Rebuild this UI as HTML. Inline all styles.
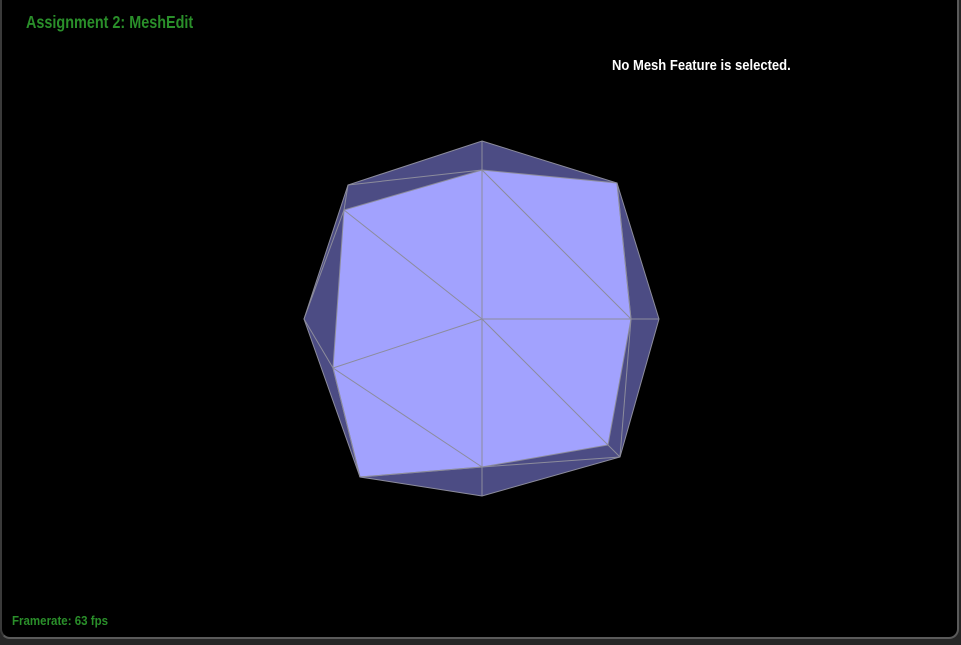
<!DOCTYPE html>
<html><head><meta charset="utf-8"><style>
html,body{margin:0;padding:0;width:961px;height:645px;background:#262626;overflow:hidden}
#frame{position:absolute;left:0;top:0;width:959px;height:639px;background:#000;border-right:2px solid #5a5a5a;border-bottom:2px solid #5a5a5a;border-left:2px solid #3a3a3a;border-radius:0 0 10px 10px;box-sizing:border-box}
.t{position:absolute;font-family:"Liberation Sans",sans-serif;font-weight:bold;white-space:nowrap;transform-origin:0 0}
</style></head><body>
<div id="frame"></div>
<div class="t" style="left:26px;top:14px;font-size:16px;color:#2a8f2a;transform:scaleX(0.9) scaleY(1.08)">Assignment 2: MeshEdit</div>
<div class="t" style="left:612px;top:56px;font-size:14px;color:#fff;transform:scaleX(0.93) scaleY(1.08)">No Mesh Feature is selected.</div>
<div class="t" style="left:12px;top:613px;font-size:12px;color:#2a8f2a;transform:scaleX(0.96) scaleY(1.1)">Framerate: 63 fps</div>
<svg width="961" height="645" style="position:absolute;left:0;top:0">
<polygon points="482,141 617,183 659,319 620,457 482,496 360,477 304,319 348,185" fill="#4c4c84"/>
<polygon points="482,170 617,183 631,319 608,445 482,467 360,477 333,368 344,210" fill="#a2a2fe"/>
<g stroke="#8c8c9c" stroke-width="1" fill="none">
<polygon points="482,141 617,183 659,319 620,457 482,496 360,477 304,319 348,185"/>
<polygon points="482,170 617,183 631,319 608,445 482,467 360,477 333,368 344,210"/>
<line x1="482" y1="141" x2="482" y2="496"/>
<line x1="482" y1="319" x2="659" y2="319"/>
<line x1="482" y1="319" x2="333" y2="368"/>
<line x1="482" y1="319" x2="344" y2="210"/>
<line x1="482" y1="170" x2="631" y2="319"/>
<line x1="482" y1="319" x2="608" y2="445"/>
<line x1="333" y1="368" x2="482" y2="467"/>
<line x1="348" y1="185" x2="482" y2="170"/>
<line x1="348" y1="185" x2="344" y2="210"/>
<line x1="304" y1="319" x2="344" y2="210"/>
<line x1="304" y1="319" x2="333" y2="368"/>
<line x1="333" y1="368" x2="360" y2="477"/>
<line x1="360" y1="477" x2="482" y2="467"/>
<line x1="482" y1="467" x2="620" y2="457"/>
<line x1="608" y1="445" x2="620" y2="457"/>
<line x1="631" y1="319" x2="620" y2="457"/>
<line x1="617" y1="183" x2="631" y2="319"/>
</g>
</svg>
</body></html>
